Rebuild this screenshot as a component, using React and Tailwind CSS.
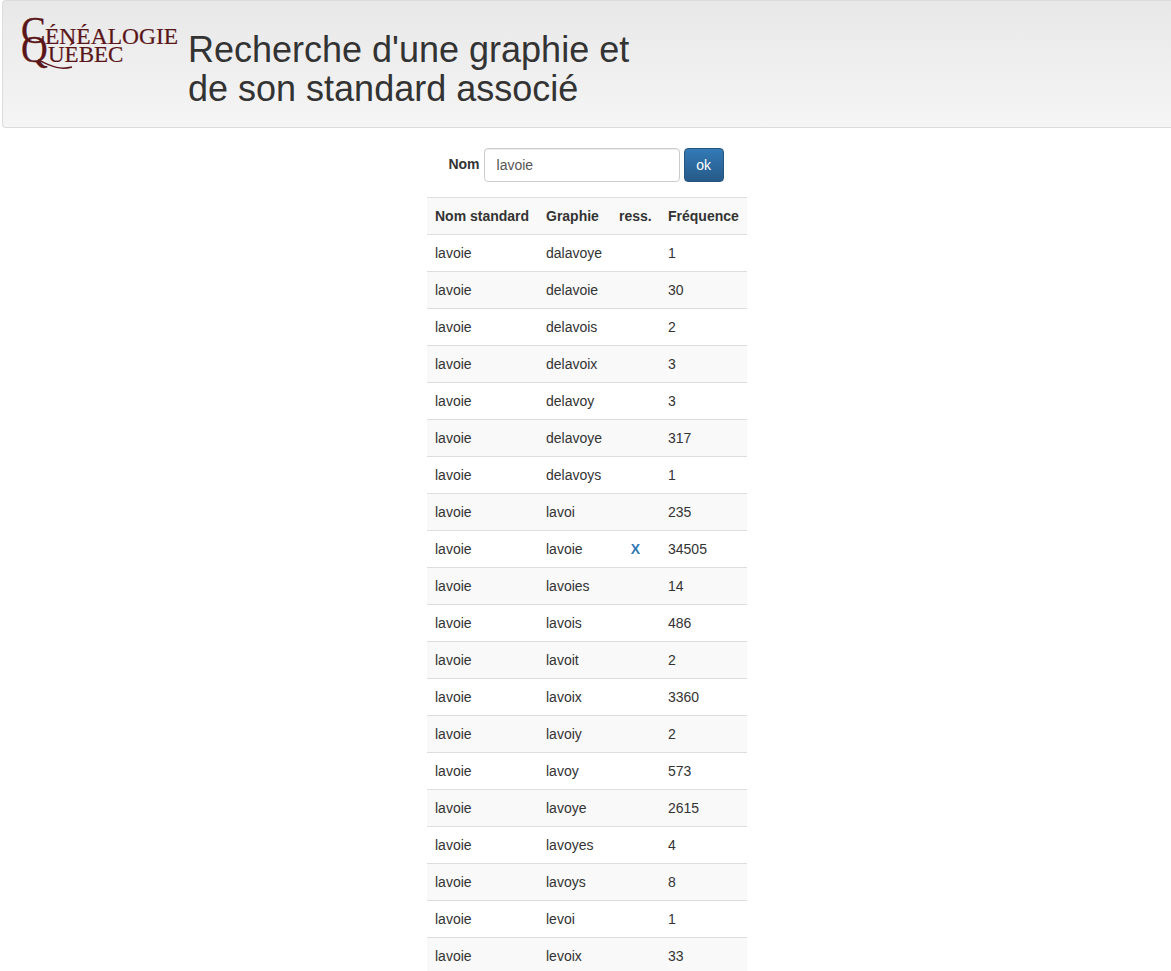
const ROWS = [
  ['dalavoye', '1'],
  ['delavoie', '30'],
  ['delavois', '2'],
  ['delavoix', '3'],
  ['delavoy', '3'],
  ['delavoye', '317'],
  ['delavoys', '1'],
  ['lavoi', '235'],
  ['lavoie', '34505', true],
  ['lavoies', '14'],
  ['lavois', '486'],
  ['lavoit', '2'],
  ['lavoix', '3360'],
  ['lavoiy', '2'],
  ['lavoy', '573'],
  ['lavoye', '2615'],
  ['lavoyes', '4'],
  ['lavoys', '8'],
  ['levoi', '1'],
  ['levoix', '33'],
]

function Logo() {
  return (
    <div className="relative w-[160px] h-[54px] shrink-0 text-[#5a1518] font-['Liberation_Serif',serif] leading-none">
      <span className="absolute left-[0px] top-[-7px] text-[37px] [-webkit-text-stroke:0.3px_#5a1518]">C</span>
      <span className="absolute left-[0px] top-[12px] text-[37px] [-webkit-text-stroke:0.3px_#5a1518]">Q</span>
      <svg className="absolute left-0 top-0" width="60" height="54" fill="none" stroke="#5a1518" strokeWidth="1.4">
        <path d="M17 41 C27 45 36 52 51 48" />
      </svg>
      <span className="absolute left-[24px] top-[6px] text-[23.5px] [-webkit-text-stroke:0.2px_#5a1518]">ÉNÉALOGIE</span>
      <span className="absolute left-[27px] top-[24px] text-[23px] [-webkit-text-stroke:0.2px_#5a1518]">UÉBEC</span>
    </div>
  )
}

export default function App() {
  return (
    <div className="h-screen overflow-hidden bg-white font-['Liberation_Sans',Arial,sans-serif] text-sm text-[#333]">
      <header className="ml-[2px] h-[128px] flex items-start pl-[18px] pt-[18px] rounded-l-[4px] border border-r-0 border-[#dcdcdc] bg-gradient-to-b from-[#e8e8e8] to-[#f5f5f5]">
        <Logo />
        <h1 className="ml-[7px] mt-[11px] w-[470px] text-[36px] leading-[39px] font-normal">
          Recherche d'une graphie et de son standard associé
        </h1>
      </header>

      <form className="mt-5 flex justify-center items-center ml-[1px]">
        <label className="mr-1 font-bold -mt-[2px]">Nom</label>
        <input
          defaultValue="lavoie"
          className="w-[196px] h-[34px] px-3 rounded border border-[#ccc] text-[#555] shadow-[inset_0_1px_1px_rgba(0,0,0,0.075)] outline-none"
        />
        <button type="button" className="ml-1 w-10 h-[34px] rounded border border-[#245580] bg-gradient-to-b from-[#337ab7] to-[#265a88] text-white">
          ok
        </button>
      </form>

      <div className="mt-[15px] flex justify-center pl-[3px]">
        <table className="w-[320px] table-fixed border-collapse">
          <colgroup>
            <col className="w-[111px]" />
            <col className="w-[73px]" />
            <col className="w-[49px]" />
            <col className="w-[87px]" />
          </colgroup>
          <thead>
            <tr className="h-[37px] bg-[#f9f9f9] border-t border-[#ddd]">
              <th className="px-2 text-left font-bold whitespace-nowrap">Nom standard</th>
              <th className="px-2 text-left font-bold">Graphie</th>
              <th className="px-2 text-left font-bold">ress.</th>
              <th className="px-2 text-left font-bold">Fréquence</th>
            </tr>
          </thead>
          <tbody>
            {ROWS.map(([graphie, freq, selected], i) => (
              <tr key={graphie} className={`h-[37px] border-t border-[#ddd] ${i % 2 === 1 ? 'bg-[#f9f9f9]' : 'bg-white'}`}>
                <td className="px-2">lavoie</td>
                <td className="px-2">{graphie}</td>
                <td className="px-2 text-center font-bold text-[#337ab7]">{selected ? 'X' : ''}</td>
                <td className="px-2">{freq}</td>
              </tr>
            ))}
          </tbody>
        </table>
      </div>
    </div>
  )
}
